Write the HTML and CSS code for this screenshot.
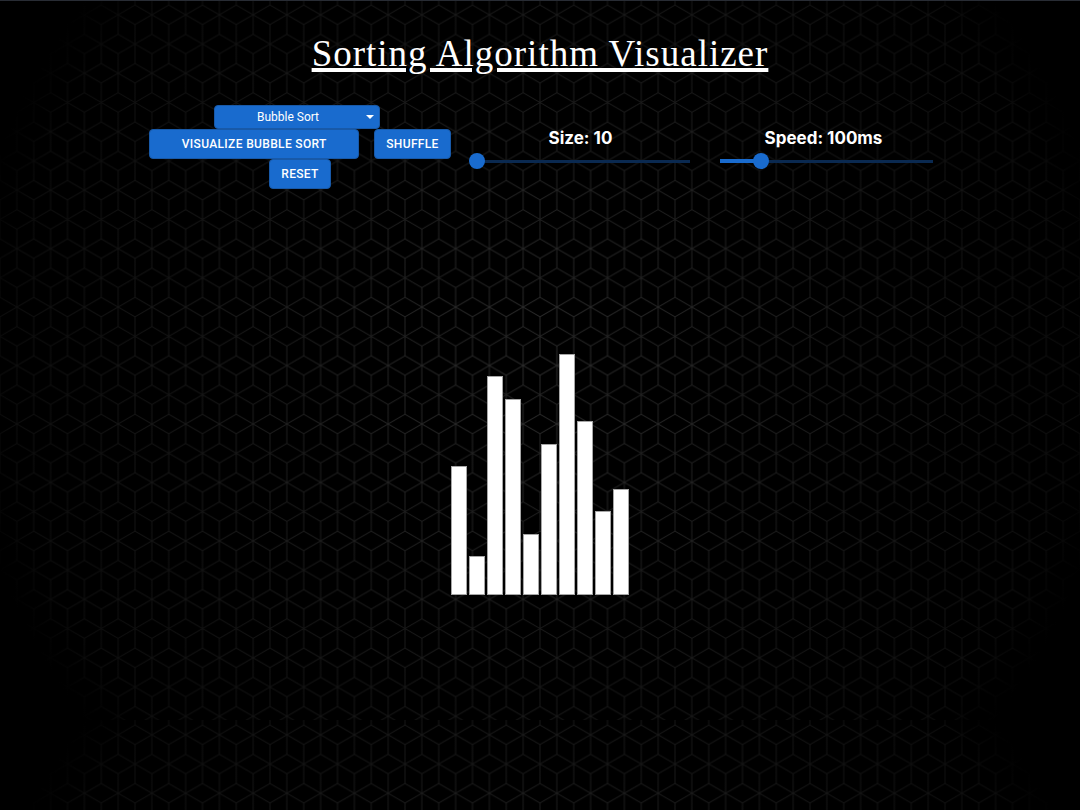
FILE: index.html
```html
<!DOCTYPE html>
<html lang="en">
<head>
<meta charset="utf-8">
<meta name="viewport" content="width=device-width, initial-scale=1">
<title>Sorting Algorithm Visualizer</title>
<link rel="stylesheet" href="styles.css">
</head>
<body>
<header class="header">
  <h1 class="title">Sorting Algorithm Visualizer</h1>
</header>
<main>
  <section class="controls" aria-label="Controls">
    <div class="actions">
      <select class="picker" aria-label="Algorithm">
        <option selected>Bubble Sort</option>
        <option>Merge Sort</option>
        <option>Quick Sort</option>
      </select>
      <div class="buttons">
        <button class="btn btn-wide" type="button">Visualize Bubble Sort</button>
        <button class="btn" type="button">Shuffle</button>
        <button class="btn" type="button">Reset</button>
      </div>
    </div>
    <div class="setting">
      <label class="setting-label" for="size">Size: 10</label>
      <input class="slider" id="size" type="range" min="10" max="100" value="10" style="--fill: 0">
    </div>
    <div class="setting">
      <label class="setting-label" for="speed">Speed: 100ms</label>
      <input class="slider" id="speed" type="range" min="5" max="500" value="100" style="--fill: 0.192">
    </div>
  </section>
  <section class="chart" aria-label="Values">
    <div class="bar" style="height: 129px"></div>
    <div class="bar" style="height: 39px"></div>
    <div class="bar" style="height: 219px"></div>
    <div class="bar" style="height: 196px"></div>
    <div class="bar" style="height: 61px"></div>
    <div class="bar" style="height: 151px"></div>
    <div class="bar" style="height: 241px"></div>
    <div class="bar" style="height: 174px"></div>
    <div class="bar" style="height: 84px"></div>
    <div class="bar" style="height: 106px"></div>
  </section>
</main>
</body>
</html>
```
FILE: styles.css
```css
:root {
  --blue: #196bce;
  --blue-edge: #1859a8;
  --rail: #0a2950;
}

* {
  box-sizing: border-box;
}

body {
  margin: 0;
  min-height: 100vh;
  border-top: 1px solid #282c34;
  color: #fff;
  font-family: Inter, "Liberation Sans", sans-serif;
  background-color: #000;
  background-image: url("data:image/svg+xml,%3Csvg xmlns='http://www.w3.org/2000/svg' viewBox='0 0 1080 720'%3E%3Cdefs%3E%3Cpattern id='p' width='33.75' height='58.456' patternUnits='userSpaceOnUse' patternTransform='translate(0 14.8)'%3E%3Cg fill='none' stroke='%232b2b2b' stroke-width='1'%3E%3Cpath id='s' d='M16.875-19.5v39M0-9.743l33.75 19.486M33.75-9.743L0 9.743'/%3E%3Cuse href='%23s' y='58.456'/%3E%3Cuse href='%23s' x='-16.875' y='29.228'/%3E%3Cuse href='%23s' x='16.875' y='29.228'/%3E%3C/g%3E%3C/pattern%3E%3CradialGradient id='g' gradientUnits='userSpaceOnUse' cx='540' cy='360' r='580'%3E%3Cstop offset='0' stop-opacity='0'/%3E%3Cstop offset='.92' stop-opacity='.68'/%3E%3Cstop offset='1'/%3E%3C/radialGradient%3E%3C/defs%3E%3Crect width='1080' height='720' fill='url(%23p)'/%3E%3Crect width='1080' height='720' fill='url(%23g)'/%3E%3C/svg%3E");
  background-size: 100% auto;
  background-repeat: repeat-y;
}

.header {
  padding: 31px 16px 0;
  text-align: center;
}

.title {
  margin: 0;
  font: 400 37px/44px "Liberation Serif", serif;
  letter-spacing: 1px;
  text-decoration: underline;
  text-decoration-thickness: 4px;
}

.controls {
  display: grid;
  grid-template-columns: 4fr 3fr 3fr;
  width: 75%;
  margin: 29px auto 0;
}

.actions {
  display: flex;
  flex-direction: column;
  align-items: center;
}

.picker {
  appearance: none;
  width: 166px;
  height: 24px;
  padding: 0 18px 0 0;
  border: 1px solid var(--blue-edge);
  border-radius: 4px;
  color: #fff;
  font: 400 12px/16px Roboto, sans-serif;
  text-align: center;
  text-align-last: center;
  background: url("data:image/svg+xml,%3Csvg xmlns='http://www.w3.org/2000/svg' viewBox='0 0 8 4'%3E%3Cpath d='M0 0h8L4 4z' fill='white'/%3E%3C/svg%3E") right 5px center / 8px 4px no-repeat var(--blue);
}

.buttons {
  display: flex;
  flex-wrap: wrap;
  justify-content: center;
  column-gap: 15px;
  padding-left: 6px;
}

.btn {
  height: 30px;
  padding: 0 11px;
  border: 1px solid var(--blue-edge);
  border-radius: 4px;
  color: #fff;
  background: var(--blue);
  font: 500 12px/20px Roboto, sans-serif;
  letter-spacing: 0.02857em;
  text-transform: uppercase;
}

.btn-wide {
  width: 210px;
}

.setting {
  display: flex;
  flex-direction: column;
  align-items: stretch;
  padding-top: 21px;
}

.setting-label {
  font-size: 17px;
  font-weight: 700;
  line-height: 24px;
  text-align: center;
}

.slider {
  appearance: none;
  height: 16px;
  margin: 3px 4px 0 10px;
  background: none;
}

.slider::-webkit-slider-runnable-track {
  height: 16px;
  background:
    linear-gradient(var(--blue), var(--blue)) 8px center / calc((100% - 16px) * var(--fill)) 4px no-repeat,
    linear-gradient(var(--rail), var(--rail)) 8px center / calc(100% - 16px) 3px no-repeat;
}

.slider::-webkit-slider-thumb {
  appearance: none;
  width: 16px;
  height: 16px;
  border-radius: 50%;
  background: var(--blue);
}

.chart {
  display: flex;
  align-items: flex-end;
  justify-content: center;
  gap: 2px;
  height: 406px;
}

.bar {
  width: 16px;
  border: 1px solid #a6a6a6;
  background: #fff;
}
```
